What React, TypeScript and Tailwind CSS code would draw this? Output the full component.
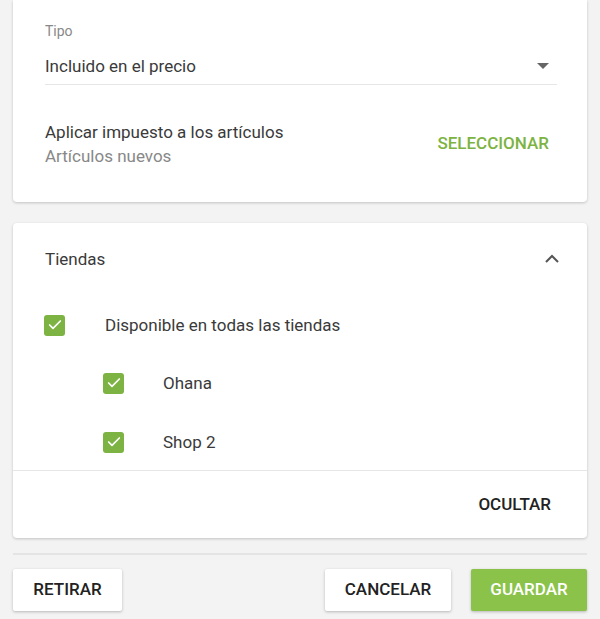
import { Check } from "lucide-react";

function Box({ className = "" }: { className?: string }) {
  return (
    <span className={`flex h-[21px] w-[21px] items-center justify-center rounded-[3px] bg-[#7cb342] ${className}`}>
      <Check size={16} strokeWidth={2.5} className="text-white" />
    </span>
  );
}

export default function App() {
  return (
    <div className="min-h-[619px] bg-[#f3f3f3] px-[13px] pb-2 font-['Roboto',sans-serif] text-[#3a3a3a]">
      <div className="rounded-b-[4px] bg-white px-8 pt-[23px] pb-[34px] shadow-[0_1px_3px_rgba(0,0,0,0.2)]">
        <div className="text-[14px] leading-4 text-[#888]">Tipo</div>
        <div className="mt-[15px] mr-[-2px] flex items-center justify-between border-b border-[#e6e6e6] pb-[6px]">
          <span className="text-[17px] leading-6">Incluido en el precio</span>
          <svg width="12" height="6" viewBox="0 0 12 6" className="mr-[8px]">
            <path d="M0 0h12L6 6z" fill="#666" />
          </svg>
        </div>
        <div className="mt-[35px] flex items-center justify-between">
          <div>
            <div className="text-[17px] leading-6">Aplicar impuesto a los artículos</div>
            <div className="text-[17px] leading-6 text-[#888]">Artículos nuevos</div>
          </div>
          <button className="mr-[6px] mt-[-1px] text-[17px] font-medium text-[#7cb342]">SELECCIONAR</button>
        </div>
      </div>

      <div className="mt-[21px] rounded-[4px] bg-white shadow-[0_1px_3px_rgba(0,0,0,0.2)]">
        <div className="flex items-center justify-between px-8 pt-6">
          <span className="text-[17px] leading-6">Tiendas</span>
          <svg width="16" height="10" viewBox="0 0 16 10" className="mr-[-5px]">
            <path d="M2 8l6-6 6 6" fill="none" stroke="#555" strokeWidth="2" />
          </svg>
        </div>
        <div className="px-8 pt-[42px] pb-[16px]">
          <div className="flex items-center">
            <Box className="-ml-px" />
            <span className="ml-[40px] text-[17px] leading-6">Disponible en todas las tiendas</span>
          </div>
          <div className="mt-[34px] flex items-center pl-[58px]">
            <Box />
            <span className="ml-[39px] text-[17px] leading-6">Ohana</span>
          </div>
          <div className="mt-[35px] flex items-center pl-[58px]">
            <Box />
            <span className="ml-[39px] text-[17px] leading-6">Shop 2</span>
          </div>
        </div>
        <div className="border-t border-[#e6e6e6]" />
        <div className="flex justify-end px-9 pt-[21px] pb-[22px]">
          <button className="text-[17px] leading-6 font-medium text-[#222]">OCULTAR</button>
        </div>
      </div>

      <div className="mt-[15px] border-t-2 border-[#e4e4e4]" />

      <div className="mt-[14px] flex items-center">
        <button className="h-[42px] w-[109px] rounded-[2px] bg-white text-[17px] font-medium text-[#222] shadow-[0_1px_3px_rgba(0,0,0,0.25)]">
          RETIRAR
        </button>
        <div className="flex-1" />
        <button className="h-[42px] w-[126px] rounded-[2px] bg-white text-[17px] font-medium text-[#222] shadow-[0_1px_3px_rgba(0,0,0,0.25)]">
          CANCELAR
        </button>
        <button className="ml-[20px] h-[42px] w-[116px] rounded-[2px] bg-[#8bc34a] text-[17px] font-medium text-white shadow-[0_1px_3px_rgba(0,0,0,0.25)]">
          GUARDAR
        </button>
      </div>
    </div>
  );
}
